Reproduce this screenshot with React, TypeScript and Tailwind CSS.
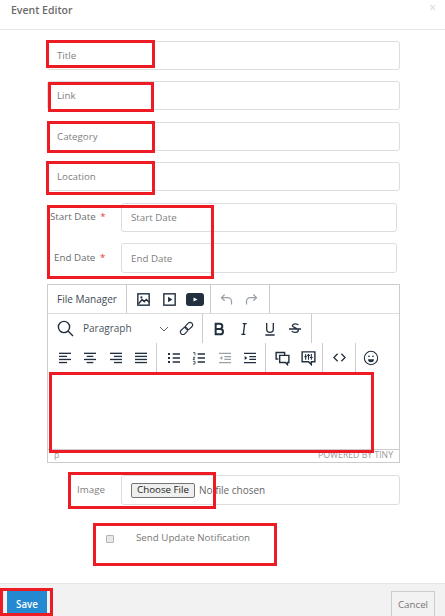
import React from "react";

const font = { fontFamily: '"Open Sans", sans-serif' };

function Icon({ children, w = 18 }: { children: React.ReactNode; w?: number }) {
  return (
    <svg width={w} height={w} viewBox="0 0 24 24" fill="none" stroke="#222f3e" strokeWidth="2">
      {children}
    </svg>
  );
}

function Btn({ children }: { children: React.ReactNode }) {
  return <div className="w-[25.5px] h-full flex items-center justify-center shrink-0">{children}</div>;
}

function Lines({ rows, color = "#222f3e" }: { rows: [number, number][]; color?: string }) {
  return (
    <Icon w={16}>
      {rows.map(([a, b], i) => (
        <path key={i} d={`M${a} ${5 + i * 4.6}H${b}`} strokeWidth="2" stroke={color} />
      ))}
    </Icon>
  );
}

function Field({ ph, cls }: { ph: string; cls: string }) {
  return (
    <div className={`flex items-center border border-[#dddddd] rounded-[3px] pl-[9px] pt-[2px] text-[9.75px] text-[#808080] ${cls}`}>
      {ph}
    </div>
  );
}

function Mark({ cls }: { cls: string }) {
  return <div className={`absolute border-[3px] border-[#ed1c24] pointer-events-none ${cls}`} />;
}

export default function App() {
  return (
    <div className="relative w-[445px] h-[616px] overflow-hidden bg-white text-[#666666]" style={font}>
      {/* header */}
      <div className="h-[30px] border-b border-[#e5e5e5] flex items-start justify-between pl-[11px] pr-[9px]">
        <span className="text-[10.5px] font-semibold text-[#6b6b6b] leading-[20px]">Event Editor</span>
        <span className="text-[12px] leading-[16px] text-[#d4d4d4]">×</span>
      </div>

      {/* form */}
      <div className="pl-[47px] pt-[11px] flex flex-col">
        <Field ph="Title" cls="w-[353px] h-[29px]" />
        <Field ph="Link" cls="w-[353px] h-[29px] mt-[11px]" />
        <Field ph="Category" cls="w-[353px] h-[29px] mt-[12px]" />
        <Field ph="Location" cls="w-[353px] h-[29px] mt-[11px]" />

        <div className="flex mt-[12px] h-[29px]">
          <div className="w-[74px] pl-[3px] pt-[7px] text-[9.75px] leading-[13px] text-[#6b6b6b]">
            Start Date <span className="text-[#e33] ml-[2px]">*</span>
          </div>
          <Field ph="Start Date" cls="w-[276px] h-[29px]" />
        </div>
        <div className="flex mt-[11px] h-[30px]">
          <div className="w-[74px] pl-[7px] pt-[8px] text-[9.75px] leading-[13px] text-[#6b6b6b]">
            End Date <span className="text-[#e33] ml-[2px]">*</span>
          </div>
          <Field ph="End Date" cls="w-[276px] h-[30px]" />
        </div>

        {/* editor */}
        <div className="mt-[11px] w-[353px] h-[179px] border border-[#cccccc] flex flex-col">
          <div className="h-[29px] border-b border-[#dddddd] flex items-center">
            <div className="h-full w-[79px] border-r border-[#cccccc] flex items-center justify-center text-[10px] text-[#3d4855]">
              File Manager
            </div>
            <div className="flex items-center h-full border-r border-[#cccccc] pl-[4px] pr-[2px]">
              <Btn>
                <Icon w={17}>
                  <rect x="4" y="4" width="16" height="16" strokeWidth="2" />
                  <path d="M5 18l5-6 3 3 3-3 4 4" strokeWidth="2" />
                  <circle cx="9" cy="9" r="1.5" fill="#222f3e" stroke="none" />
                </Icon>
              </Btn>
              <Btn>
                <Icon w={17}>
                  <rect x="4" y="4" width="16" height="16" strokeWidth="2" />
                  <path d="M10 8l6 4-6 4z" fill="#222f3e" stroke="none" />
                </Icon>
              </Btn>
              <Btn>
                <svg width="18" height="13" viewBox="0 0 18 13">
                  <rect width="18" height="13" rx="3" fill="#222f3e" />
                  <path d="M7.5 4.5l4 2-4 2z" fill="#fff" />
                </svg>
              </Btn>
            </div>
            <div className="flex items-center h-full border-r border-[#cccccc] pl-[3px] pr-[4px]">
              <Btn>
                <Icon w={15}>
                  <path d="M9 4L4 9l5 5M4 9h10a6 6 0 0 1 6 6v5" stroke="#9aa0a8" />
                </Icon>
              </Btn>
              <Btn>
                <Icon w={15}>
                  <path d="M15 4l5 5-5 5M20 9H10a6 6 0 0 0-6 6v5" stroke="#9aa0a8" />
                </Icon>
              </Btn>
            </div>
          </div>

          <div className="h-[29px] flex items-center">
            <div className="flex items-center h-full border-r border-[#cccccc] w-[155px]">
              <div className="w-[35px] flex justify-center">
                <svg width="17" height="17" viewBox="0 0 17 17" fill="none" stroke="#222f3e" strokeWidth="1.4">
                  <circle cx="7" cy="7" r="5.6" />
                  <path d="M11 11l5 5" />
                </svg>
              </div>
              <span className="text-[10px] text-[#4a5562] w-[76px]">Paragraph</span>
              <svg width="10" height="6" viewBox="0 0 10 6" fill="none" stroke="#5a6470" strokeWidth="1">
                <path d="M1 1l4 4 4-4" />
              </svg>
              <div className="ml-[10px]">
                <Icon w={15}>
                  <g transform="rotate(-45 12 12)" strokeWidth="1.8">
                    <rect x="0" y="8" width="13" height="8" rx="4" />
                    <rect x="11" y="8" width="13" height="8" rx="4" />
                  </g>
                </Icon>
              </div>
            </div>
            <div className="flex items-center h-full border-r border-[#cccccc] px-[3px]">
              <Btn><Icon w={16}><path d="M7 4h6a4 4 0 0 1 0 8H7zM7 12h7a4 4 0 0 1 0 8H7z" strokeWidth="3" /></Icon></Btn>
              <Btn><Icon w={16}><path d="M10 4h6M8 20h6M13 4l-2 16" strokeWidth="2" /></Icon></Btn>
              <Btn><Icon w={16}><path d="M7 3v9a5 5 0 0 0 10 0V3M5 21h14" strokeWidth="2" /></Icon></Btn>
              <Btn><Icon w={16}><path d="M3 12h18M17 6c-1-2-8-3-9 1 0 3 8 3 9 7 0 4-8 4-10 1" strokeWidth="2" /></Icon></Btn>
            </div>
          </div>

          <div className="h-[29px] flex items-center">
            <div className="flex items-center h-full border-r border-[#cccccc] pl-[4px] pr-[3px] w-[109px]">
              <Btn><Lines rows={[[3, 21], [3, 15], [3, 21], [3, 15]]} /></Btn>
              <Btn><Lines rows={[[3, 21], [7, 17], [3, 21], [7, 17]]} /></Btn>
              <Btn><Lines rows={[[3, 21], [9, 21], [3, 21], [9, 21]]} /></Btn>
              <Btn><Lines rows={[[3, 21], [3, 21], [3, 21], [3, 21]]} /></Btn>
            </div>
            <div className="flex items-center h-full border-r border-[#cccccc] pl-[4px] pr-[2px]">
              <Btn>
                <Icon w={16}>
                  <path d="M10 6h11M10 12h11M10 18h11" />
                  <path d="M3 6h3M3 12h3M3 18h3" strokeWidth="3" />
                </Icon>
              </Btn>
              <Btn>
                <Icon w={16}>
                  <path d="M10 6h11M10 12h11M10 18h11" />
                  <path d="M3 4h3v4M3 11h3l-3 3h3M3 17h3v4H3" strokeWidth="1.2" />
                </Icon>
              </Btn>
              <Btn>
                <Icon w={16}>
                  <path d="M3 5h18M11 10h10M11 14h10M3 19h18" stroke="#9aa0a8" />
                  <path d="M8 9l-4 3 4 3z" fill="#9aa0a8" stroke="none" />
                </Icon>
              </Btn>
              <Btn>
                <Icon w={16}>
                  <path d="M3 5h18M11 10h10M11 14h10M3 19h18" />
                  <path d="M4 9l4 3-4 3z" fill="#222f3e" stroke="none" />
                </Icon>
              </Btn>
            </div>
            <div className="flex items-center h-full border-r border-[#cccccc] pl-[4px] pr-[1px]">
              <Btn>
                <Icon w={17}>
                  <path d="M15 12V5H3v9h3" />
                  <path d="M8 9h13v10h-2v3l-3-3H8z" fill="#fff" />
                </Icon>
              </Btn>
              <Btn>
                <Icon w={17}>
                  <path d="M3 4h18v14h-5v4l-4-4H3z" />
                  <path d="M8 7v8M12 7v8M16 7v8M6 11h4M10 9h4M14 12h4" strokeWidth="1.5" />
                </Icon>
              </Btn>
            </div>
            <div className="flex items-center h-full border-r border-[#cccccc] pl-[4px] pr-[2px]">
              <Btn>
                <Icon w={15}>
                  <path d="M9 6l-6 6 6 6M15 6l6 6-6 6" />
                </Icon>
              </Btn>
            </div>
            <div className="h-full flex items-center pl-[3px]">
              <Btn>
                <Icon w={16}>
                  <circle cx="12" cy="12" r="10" strokeWidth="1.6" />
                  <path d="M7.5 14h9a4.5 4.5 0 0 1-9 0z" fill="#222f3e" stroke="none" />
                  <path d="M7.5 9.5h3M13.5 9.5h3" strokeWidth="1.6" />
                </Icon>
              </Btn>
            </div>
          </div>

          <div className="flex-1" />
          <div className="h-[13px] border-t border-[#cccccc] flex items-center justify-between pl-[6px] pr-[6px] text-[8.7px] text-[#9a9a9a]">
            <span>p</span>
            <span>POWERED BY TINY</span>
          </div>
        </div>

        {/* image */}
        <div className="flex mt-[12px] h-[30px]">
          <div className="w-[74px] pl-[30px] pt-[8px] text-[9.75px] leading-[13px] text-[#808080]">Image</div>
          <div className="w-[279px] h-[30px] border border-[#dddddd] rounded-[3px] flex items-center pl-[9px] text-[10px] text-[#666666]">
            <div className="w-[64px] h-[15px] bg-[#efefef] border border-[#767676] rounded-[2px] flex items-center justify-center text-[9.75px] text-[#222222] mr-[4px]">
              Choose File
            </div>
            No file chosen
          </div>
        </div>

        {/* notify */}
        <div className="flex items-start mt-[26px] pl-[59px] h-[53px]">
          <div className="w-[8px] h-[8px] mt-[4px] bg-[#e8e8e8] border border-[#b5b5b5] rounded-[1px]" />
          <span className="ml-[22px] text-[9.75px] leading-[13px] text-[#777777]">Send Update Notification</span>
        </div>
      </div>

      {/* footer */}
      <div className="absolute left-0 right-0 bottom-0 h-[33px] bg-[#f2f2f2] border-t border-[#e5e5e5] flex items-start justify-between pl-[7px] pr-[10px] pt-[7px]">
        <div className="w-[40px] h-[30px] bg-[#2389d1] text-white text-[9.75px] font-semibold flex items-center justify-center pb-[2px]">
          Save
        </div>
        <div className="w-[44px] h-[30px] border border-[#cccccc] text-[#777777] text-[9.75px] flex items-center justify-center pb-[2px]">
          Cancel
        </div>
      </div>

      {/* annotation rectangles */}
      <Mark cls="left-[46px] top-[40px] w-[109px] h-[28px]" />
      <Mark cls="left-[48px] top-[82px] w-[106px] h-[30px]" />
      <Mark cls="left-[47px] top-[121px] w-[108px] h-[32px]" />
      <Mark cls="left-[46px] top-[161px] w-[109px] h-[34px]" />
      <Mark cls="left-[47px] top-[205px] w-[167px] h-[74px]" />
      <Mark cls="left-[49px] top-[372px] w-[325px] h-[81px]" />
      <Mark cls="left-[68px] top-[472px] w-[148px] h-[37px]" />
      <Mark cls="left-[93px] top-[523px] w-[184px] h-[43px]" />
      <Mark cls="left-0 top-[588px] w-[53px] h-[28px]" />
    </div>
  );
}
